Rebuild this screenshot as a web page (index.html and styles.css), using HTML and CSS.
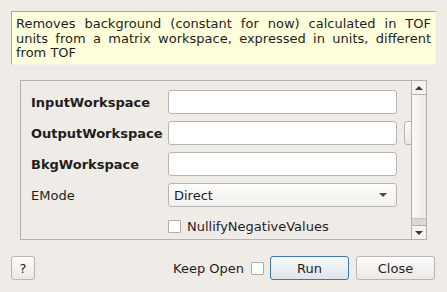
FILE: index.html
```html
<!DOCTYPE html>
<html>
<head>
<meta charset="utf-8">
<link rel="stylesheet" href="styles.css">
</head>
<body>
<div class="dialog">
  <div class="desc">Removes background (constant for now) calculated in TOF units from a matrix workspace, expressed in units, different from TOF</div>
  <div class="frame">
    <div class="content">
      <div class="form">
        <div class="label bold">InputWorkspace</div>
        <div class="input"></div>
        <div></div>
        <div class="label bold">OutputWorkspace</div>
        <div class="input"></div>
        <div class="browse"></div>
        <div class="label bold">BkgWorkspace</div>
        <div class="input"></div>
        <div></div>
        <div class="label">EMode</div>
        <div class="combo"><span>Direct</span><span class="arrow"></span></div>
        <div></div>
        <div></div>
        <div class="check-row"><span class="check"></span><span>NullifyNegativeValues</span></div>
        <div></div>
      </div>
    </div>
    <div class="scrollbar">
      <div class="sb-btn"><span class="tri up"></span></div>
      <div class="sb-handle"></div>
      <div class="sb-groove"></div>
      <div class="sb-btn bottom"><span class="tri down"></span></div>
    </div>
  </div>
  <div class="buttons">
    <button class="btn help">?</button>
    <div class="spacer"></div>
    <span class="keep">Keep Open</span>
    <span class="check keep-check"></span>
    <button class="btn run">Run</button>
    <button class="btn close">Close</button>
  </div>
</div>
</body>
</html>
```
FILE: styles.css
```css
html, body {
  margin: 0;
  padding: 0;
  background: #efebe7;
  font-family: "DejaVu Sans", sans-serif;
  font-size: 13px;
  color: #1e1e1e;
}
.dialog {
  width: 447px;
  height: 292px;
  padding: 11px 11px 0 11px;
  box-sizing: border-box;
}
.desc {
  background: #ffffdc;
  border-top: 1px solid #a8a49f;
  border-left: 1px solid #a8a49f;
  border-right: 1px solid #f4f2ef;
  border-bottom: 1px solid #f4f2ef;
  height: 54px;
  box-sizing: border-box;
  padding: 5px 4px 0 4px;
  text-align: justify;
  line-height: 14.5px;
}
.frame {
  margin: 15px 9px 0 9px;
  height: 160px;
  box-sizing: border-box;
  border: 1px solid #b4b0ab;
  display: flex;
}
.content {
  flex: 1;
  overflow: hidden;
  padding: 9px 0 0 10px;
}
.form {
  display: grid;
  grid-template-columns: 137px 229px 30px;
  grid-auto-rows: 24px;
  row-gap: 7px;
  column-gap: 0;
  align-items: center;
}
.label {
  white-space: nowrap;
}
.bold {
  font-weight: bold;
}
.input, .combo {
  height: 24px;
  box-sizing: border-box;
  background: #fff;
  border: 1px solid #b8b4af;
  border-radius: 3px;
}
.browse {
  height: 24px;
  box-sizing: border-box;
  margin-left: 7px;
  border: 1px solid #b8b4af;
  border-radius: 3px;
  background: linear-gradient(#fbfbfa, #ebe9e6);
}
.combo {
  background: linear-gradient(#fdfdfd, #f1f0ee);
  display: flex;
  align-items: center;
  justify-content: space-between;
  padding: 0 9px 0 5px;
}
.arrow {
  width: 0;
  height: 0;
  border-left: 4px solid transparent;
  border-right: 4px solid transparent;
  border-top: 4px solid #4a4a4a;
}
.check-row {
  display: flex;
  align-items: center;
  gap: 6px;
  white-space: nowrap;
  height: 24px;
}
.check {
  display: inline-block;
  width: 13px;
  height: 13px;
  box-sizing: border-box;
  background: #fff;
  border: 1px solid #b0aca7;
  border-radius: 1px;
}
.scrollbar {
  width: 14px;
  border-left: 1px solid #b4b0ab;
  display: flex;
  flex-direction: column;
}
.sb-btn {
  height: 14px;
  box-sizing: border-box;
  border-bottom: 1px solid #b4b0ab;
  background: #f5f4f2;
  display: flex;
  align-items: center;
  justify-content: center;
}
.sb-btn.bottom {
  border-bottom: none;
  border-top: 1px solid #b4b0ab;
  height: 14px;
}
.tri {
  width: 0;
  height: 0;
  border-left: 4px solid transparent;
  border-right: 4px solid transparent;
}
.tri.up { border-bottom: 4px solid #3c3c3c; }
.tri.down { border-top: 4px solid #3c3c3c; }
.sb-handle {
  flex: 1;
  background: linear-gradient(90deg, #fafafa, #eceae8);
}
.sb-groove {
  height: 6px;
  background: #dcd9d5;
  border-top: 1px solid #c8c5c1;
}
.buttons {
  display: flex;
  align-items: center;
  margin-top: 16px;
  padding-right: 1px;
  height: 24px;
}
.spacer { flex: 1; }
.btn {
  height: 24px;
  box-sizing: border-box;
  font-family: "DejaVu Sans", sans-serif;
  font-size: 13px;
  color: #1e1e1e;
  border: 1px solid #b8b4af;
  border-radius: 3px;
  background: linear-gradient(#fbfbfa, #ebe9e6);
  padding: 0;
}
.help { width: 24px; }
.keep { margin-right: 7px; }
.keep-check { margin-right: 6px; }
.run {
  width: 79px;
  border-color: #3f78a8;
  background: linear-gradient(#f5f7f9, #e0e5ea);
}
.close {
  width: 79px;
  margin-left: 7px;
}
```
